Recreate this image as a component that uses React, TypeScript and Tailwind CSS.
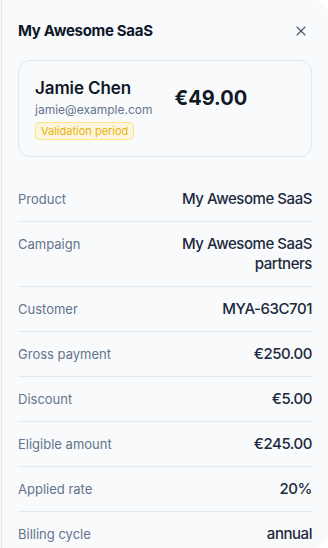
import { X } from "lucide-react";

const ROWS = [
  { label: "Product", value: "My Awesome SaaS" },
  { label: "Campaign", value: "My Awesome SaaS partners" },
  { label: "Customer", value: "MYA-63C701" },
  { label: "Gross payment", value: "€250.00" },
  { label: "Discount", value: "€5.00" },
  { label: "Eligible amount", value: "€245.00" },
  { label: "Applied rate", value: "20%" },
  { label: "Billing cycle", value: "annual" },
];

export default function App() {
  return (
    <div
      className="w-[328px] h-[548px] bg-white flex overflow-hidden"
      style={{ fontFamily: "Inter, 'Noto Sans', sans-serif" }}
    >
      <div className="w-[1px] shrink-0 bg-[#fdf8ea]" />
      <div className="flex-1 min-w-0 bg-[#f8fafc] border-l border-[#e2e8f0] rounded-r-2xl px-4 pt-[19px]">
        <div className="flex items-center justify-between h-6">
          <h1 className="text-[15px] font-bold text-[#0f172a] tracking-[-0.3px]">My Awesome SaaS</h1>
          <X className="w-4 h-4 mr-[3px] text-[#475569]" strokeWidth={1.6} />
        </div>

        <div className="mt-[17px] rounded-xl border border-[#e2e8f0] bg-[#f8fafc] px-4 pt-[15px] pb-4 flex items-start gap-[22px]">
          <div className="flex flex-col">
            <p className="text-[17px] leading-6 font-semibold text-[#111827] tracking-[-0.1px]">Jamie Chen</p>
            <p className="text-[12px] leading-5 text-[#64748b]">jamie@example.com</p>
            <span className="mt-[2px] self-start rounded border border-[#fde68a] bg-[#fdf5dd] px-[5px] h-[18px] flex items-center text-[11px] text-[#eab308]">
              Validation period
            </span>
          </div>
          <p className="mt-[8px] text-[20px] leading-7 font-bold text-[#111827]">€49.00</p>
        </div>

        <div className="mt-5">
          {ROWS.map(({ label, value }, i) => (
            <div
              key={label}
              className={`flex items-start justify-between py-3 ${i > 0 ? "border-t border-[#e2e8f0]" : ""}`}
            >
              <span className="text-[13px] leading-5 text-[#64748b]">{label}</span>
              <span className="max-w-[140px] text-right text-[15px] leading-5 font-medium tracking-[-0.45px] text-[#1e293b]">
                {value}
              </span>
            </div>
          ))}
        </div>
      </div>
    </div>
  );
}
